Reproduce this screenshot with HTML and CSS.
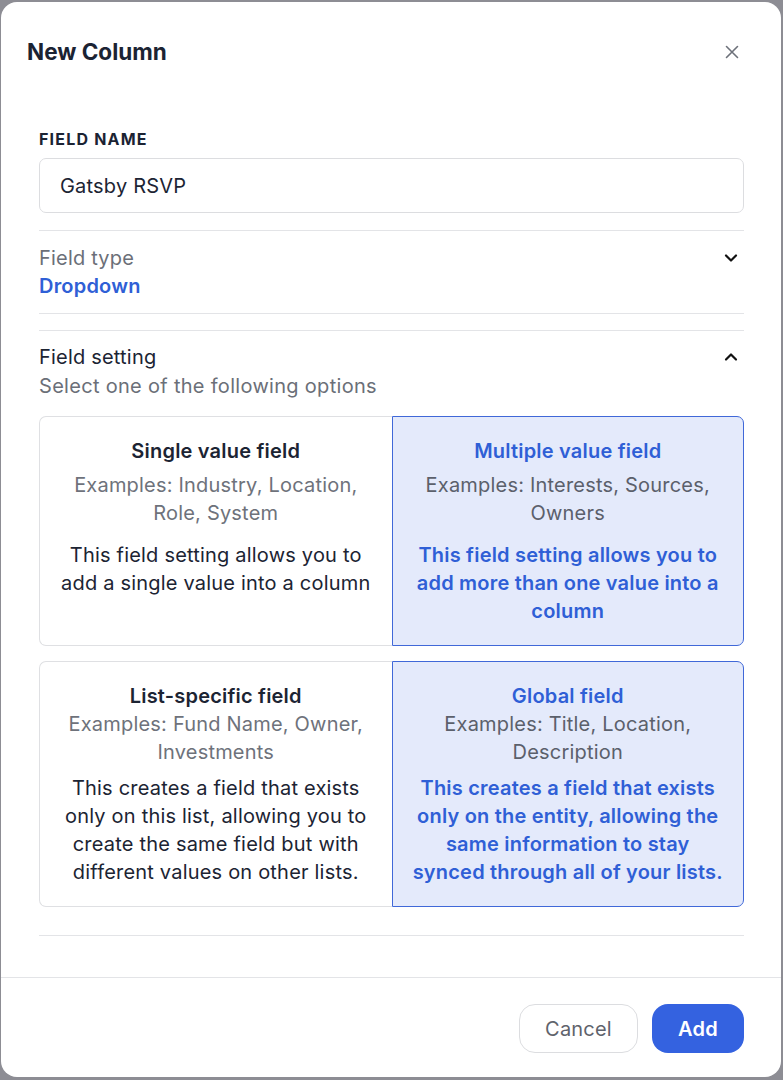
FILE: index.html
```html
<!DOCTYPE html>
<html lang="en">
<head>
    <meta charset="UTF-8">
    <meta name="viewport" content="width=device-width, initial-scale=1.0">
    <title>New Column</title>
    <link rel="stylesheet" href="styles.css">
</head>
<body>
    <div class="modal">
        <div class="modal-header">
            <h2>New Column</h2>
            <button class="icon-btn close-btn" aria-label="Close">
                <svg width="16" height="16" viewBox="0 0 16 16" fill="none" stroke="currentColor" stroke-width="1.6" stroke-linecap="round">
                    <path d="M2.5 2.5l11 11M13.5 2.5l-11 11"/>
                </svg>
            </button>
        </div>

        <div class="modal-body">
            <div class="section name-section">
                <label for="field-name">Field name</label>
                <input type="text" id="field-name" value="Gatsby RSVP">
            </div>

            <div class="section toggle-section type-section">
                <div class="toggle-text">
                    <div class="toggle-title muted">Field type</div>
                    <div class="toggle-value">Dropdown</div>
                </div>
                <svg class="chevron" width="16" height="16" viewBox="0 0 16 16" fill="none" stroke="currentColor" stroke-width="2.2" stroke-linecap="round" stroke-linejoin="round">
                    <path d="M3 5.5l5 5 5-5"/>
                </svg>
            </div>

            <div class="section setting-section">
                <div class="toggle-section">
                    <div class="toggle-text">
                        <div class="toggle-title">Field setting</div>
                        <div class="toggle-sub">Select one of the following options</div>
                    </div>
                    <svg class="chevron" width="16" height="16" viewBox="0 0 16 16" fill="none" stroke="currentColor" stroke-width="2.2" stroke-linecap="round" stroke-linejoin="round">
                        <path d="M3 10.5l5-5 5 5"/>
                    </svg>
                </div>

                <div class="option-row row-value">
                    <div class="option">
                        <div class="option-title">Single value field</div>
                        <div class="option-examples">Examples: Industry, Location, Role, System</div>
                        <div class="option-desc">This field setting allows you to add a single value into a column</div>
                    </div>
                    <div class="option selected">
                        <div class="option-title">Multiple value field</div>
                        <div class="option-examples">Examples: Interests, Sources, Owners</div>
                        <div class="option-desc">This field setting allows you to add more than one value into a column</div>
                    </div>
                </div>

                <div class="option-row row-scope">
                    <div class="option">
                        <div class="option-title">List-specific field</div>
                        <div class="option-examples">Examples: Fund Name, Owner, Investments</div>
                        <div class="option-desc">This creates a field that exists only on this list, allowing you to create the same field but with different values on other lists.</div>
                    </div>
                    <div class="option selected">
                        <div class="option-title">Global field</div>
                        <div class="option-examples">Examples: Title, Location, Description</div>
                        <div class="option-desc">This creates a field that exists only on the entity, allowing the same information to stay synced through all of your lists.</div>
                    </div>
                </div>
            </div>
        </div>

        <div class="modal-footer">
            <button class="btn btn-secondary">Cancel</button>
            <button class="btn btn-primary">Add</button>
        </div>
    </div>
</body>
</html>
```

FILE: styles.css
```css
* {
    box-sizing: border-box;
}
body {
    margin: 0;
    background-color: #8d8d94;
    font-family: "Inter", "Noto Sans", sans-serif;
    color: #1c2433;
}
.modal {
    display: flex;
    flex-direction: column;
    width: 780px;
    height: 1075px;
    margin: 2px 2px 0 1px;
    background-color: #fff;
    border-radius: 16px;
    overflow: hidden;
}
.modal-header {
    display: flex;
    justify-content: space-between;
    align-items: center;
    padding: 36px 38px 0 26px;
}
.modal-header h2 {
    margin: 0;
    font-size: 22.5px;
    line-height: 28px;
    font-weight: 700;
    color: #1b2333;
}
.icon-btn {
    background: none;
    border: none;
    padding: 0;
    cursor: pointer;
    display: flex;
}
.close-btn {
    color: #6d717a;
    margin-right: 3px;
}
.modal-body {
    flex: 1;
    padding: 0 37px 0 38px;
}
.section {
    border-bottom: 1px solid #e3e4e7;
}
.name-section {
    padding: 63px 0 17px;
}
.name-section label {
    display: block;
    font-size: 16px;
    line-height: 20px;
    font-weight: 700;
    letter-spacing: 1.2px;
    text-transform: uppercase;
    color: #1b2333;
    margin-bottom: 9px;
}
.name-section input {
    width: 100%;
    height: 55px;
    padding: 0 20px;
    border: 1px solid #dcdde0;
    border-radius: 7px;
    font-family: inherit;
    font-size: 20px;
    letter-spacing: 0.2px;
    color: #1c2433;
    outline: none;
}
.toggle-section {
    display: flex;
    justify-content: space-between;
    align-items: flex-start;
}
.toggle-section .chevron {
    color: #111;
    margin: 6px 5px 0 0;
}
.type-section {
    padding: 13px 0 13px;
}
.toggle-title,
.toggle-value,
.toggle-sub {
    font-size: 20px;
    line-height: 28px;
    letter-spacing: 0.2px;
}
.toggle-title {
    color: #1c2433;
}
.toggle-title.muted,
.toggle-sub {
    color: #6b6f78;
}
.toggle-sub {
    margin-top: 1px;
    letter-spacing: 0.3px;
}
.toggle-value {
    font-weight: 600;
    color: #2f5fd6;
}
.setting-section {
    margin-top: 16px;
    border-top: 1px solid #e3e4e7;
    padding: 12px 0 28px;
}
.option-row {
    display: grid;
    grid-template-columns: 1fr 1fr;
    margin-top: 15px;
}
.row-value {
    margin-top: 16px;
}
.option {
    padding: 20px 16px;
    text-align: center;
    font-size: 20px;
    line-height: 28px;
    letter-spacing: 0.2px;
    border: 1px solid #dfe0e3;
    border-right: none;
    border-radius: 7px 0 0 7px;
    background-color: #fff;
}
.option.selected {
    border: 1.5px solid #4068d8;
    border-radius: 0 7px 7px 0;
    background-color: #e4eafb;
}
.option-title {
    font-weight: 600;
    color: #1c2433;
}
.option-examples {
    color: #6e727b;
}
.option-desc {
    color: #1c2433;
}
.option.selected .option-title,
.option.selected .option-desc {
    color: #2f5fd6;
    font-weight: 600;
}
.option.selected .option-examples {
    color: #5b606b;
}
.row-value .option-examples {
    margin-top: 6px;
}
.row-value .option-desc {
    margin-top: 14px;
}
.row-scope .option-desc {
    margin-top: 8px;
}
.modal-footer {
    display: flex;
    justify-content: flex-end;
    gap: 14px;
    padding: 26px 37px 24px;
    border-top: 1px solid #e3e4e7;
}
.btn {
    height: 49px;
    border-radius: 16px;
    font-family: inherit;
    font-size: 20px;
    letter-spacing: 0.2px;
    cursor: pointer;
}
.btn-secondary {
    width: 119px;
    background-color: #fff;
    border: 1px solid #dcdde0;
    color: #5f636c;
}
.btn-primary {
    width: 92px;
    background-color: #3462e0;
    border: none;
    color: #fff;
    font-weight: 600;
}
```
